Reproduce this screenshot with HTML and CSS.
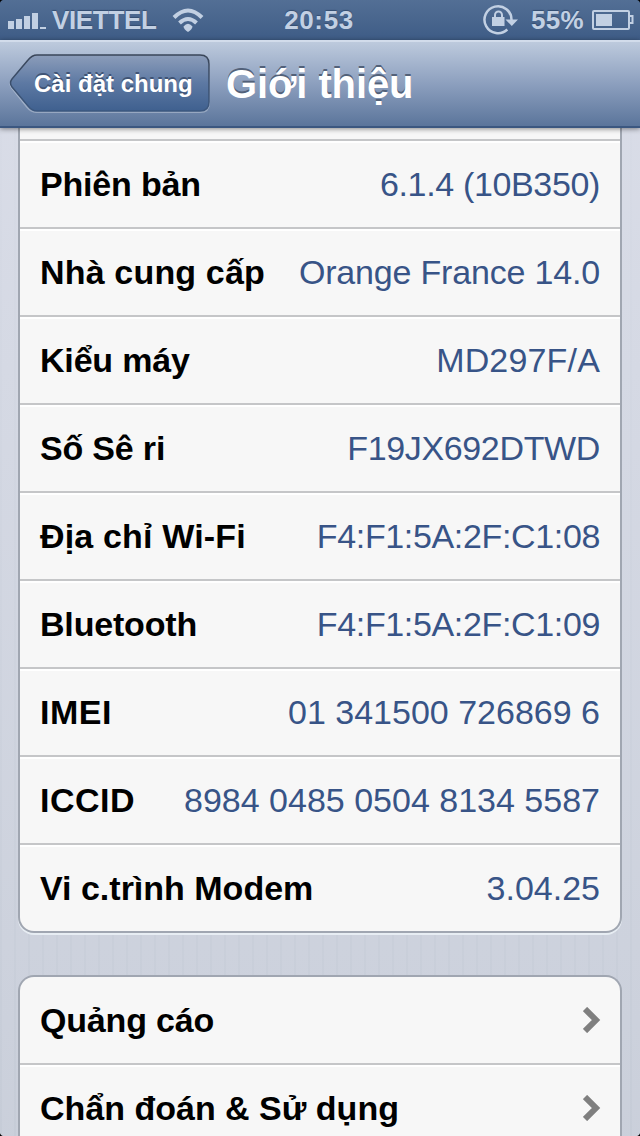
FILE: index.html
```html
<!DOCTYPE html>
<html lang="vi">
<head>
<meta charset="utf-8">
<title>Giới thiệu</title>
<link rel="stylesheet" href="styles.css">
</head>
<body>
<div class="screen">
  <div class="status">
    <div class="status-left">
      <svg class="signal" width="40" height="20" viewBox="0 0 40 20"><path d="M0 11h6v8H0zM8 9h6v10H8zM16 6h6v13h-6zM24 3h6v16h-6zM32 17h6v2h-6z"/></svg>
      <span class="carrier">VIETTEL</span>
      <svg class="wifi" width="32" height="24" viewBox="0 0 32 24"><path class="line" d="M2 9.500Q16-4.500 30 9.500M7.500 15Q16 7 24.500 15"/><path d="M11.500 18.500Q16 13 20.500 18.500Q20 21.500 16 24Q12 21.500 11.500 18.500z"/></svg>
    </div>
    <span class="clock">20:53</span>
    <div class="status-right">
      <svg class="lock" width="36" height="32" viewBox="0 0 36 32"><path class="ring" d="M24.300 25.500A13.500 13.500 0 1 1 28.500 16"/><path d="M22.500 15.500h12.500l-6.200 6.500zM9 13h12.500v9H9z"/><path class="shackle" d="M12 14v-3a3.500 3.500 0 0 1 7 0V14"/></svg>
      <span class="percent">55%</span>
      <svg class="battery" width="42" height="20" viewBox="0 0 42 20"><rect class="case" x="1" y="1" width="36" height="18" rx="1"/><path d="M4 4h16v12H4z"/><path class="case" d="M37 6h3.500v7H37"/></svg>
    </div>
  </div>
  <div class="nav">
    <div class="back">
      <svg class="back-shape" width="204" height="62" viewBox="0 0 204 62">
        <defs><linearGradient id="fill" x1="0" y1="0" x2="0" y2="1"><stop offset="0" stop-color="#8c9dba"/><stop offset=".5" stop-color="#5d79a3"/><stop offset="1" stop-color="#3f608f"/></linearGradient>
        <linearGradient id="edge" x1="0" y1="0" x2="0" y2="1"><stop offset="0" stop-color="#3a4659"/><stop offset="1" stop-color="#3c587f"/></linearGradient></defs>
        <path class="glow" d="M27 3H191Q200 3 200 12V49Q200 58 191 58H27Q22 58 18 53L3 34Q0 30 3 26Z"/>
        <path fill="url(#fill)" stroke="url(#edge)" stroke-width="1.500" d="M28 1H191Q200 1 200 10V48Q200 57 191 57H28Q23 57 19 52L3 33Q0 29 3 25L19 6Q23 1 28 1Z"/>
      </svg>
      <span class="back-label">Cài đặt chung</span>
    </div>
    <h1 class="title">Giới thiệu</h1>
  </div>
  <div class="content">
    <div class="group group-continued">
      <div class="row row-cut"></div>
      <div class="row"><span class="label tight">Phiên bản</span><span class="value tight-2">6.1.4 (10B350)</span></div>
      <div class="row"><span class="label loose">Nhà cung cấp</span><span class="value tight">Orange France 14.0</span></div>
      <div class="row"><span class="label tight">Kiểu máy</span><span class="value loose">MD297F/A</span></div>
      <div class="row"><span class="label tight">Số Sê ri</span><span class="value tight-2">F19JX692DTWD</span></div>
      <div class="row"><span class="label loose">Địa chỉ Wi-Fi</span><span class="value tight-2">F4:F1:5A:2F:C1:08</span></div>
      <div class="row"><span class="label tight">Bluetooth</span><span class="value tight-2">F4:F1:5A:2F:C1:09</span></div>
      <div class="row"><span class="label loose-2">IMEI</span><span class="value">01 341500 726869 6</span></div>
      <div class="row"><span class="label loose-2">ICCID</span><span class="value">8984 0485 0504 8134 5587</span></div>
      <div class="row"><span class="label">Vi c.trình Modem</span><span class="value">3.04.25</span></div>
    </div>
    <div class="group group-links">
      <div class="row row-first"><span class="label tight">Quảng cáo</span><svg class="chevron" width="18" height="26" viewBox="0 0 18 26"><path d="M2 2L13 13L2 24"/></svg></div>
      <div class="row"><span class="label">Chẩn đoán &amp; Sử dụng</span><svg class="chevron" width="18" height="26" viewBox="0 0 18 26"><path d="M2 2L13 13L2 24"/></svg></div>
    </div>
  </div>
  <i class="corner tl"></i><i class="corner tr"></i><i class="corner bl"></i><i class="corner br"></i>
</div>
</body>
</html>
```
FILE: styles.css
```css
* { box-sizing: border-box; }
body { margin: 0; font-family: "Liberation Sans", Arial, sans-serif; }
svg { display: block; flex: none; }
.screen { position: relative; width: 640px; height: 1136px; display: flex; flex-direction: column; overflow: hidden; background: #cbd0db; }

.status { height: 40px; flex: none; display: grid; grid-template-columns: 1fr auto 1fr; align-items: center; padding: 0 6px 0 8px; background: linear-gradient(#536f95, #3e5c86); color: #c2d0e3; font-size: 26px; font-weight: bold; line-height: 40px; text-shadow: 0 -1px 1px #344d70; }
.status svg { fill: #c2d0e3; }
.status-left, .status-right { display: flex; align-items: center; }
.status-right { justify-content: flex-end; }
.carrier { margin-left: 4px; letter-spacing: -.35px; }
.wifi { margin-left: 16px; }
.wifi .line { fill: none; stroke: #c2d0e3; stroke-width: 4; }
.clock { letter-spacing: .6px; margin-right: 4px; }
.lock { margin-right: 12px; }
.lock .ring, .lock .shackle, .battery .case { fill: none; stroke: #c2d0e3; stroke-width: 2; }
.lock .ring { stroke-width: 2.500px; }
.percent { margin-right: 8px; letter-spacing: .3px; }

.nav { position: relative; z-index: 1; height: 88px; flex: none; display: flex; align-items: flex-start; padding: 12px 0 0 9px; background: linear-gradient(#bdcadd, #8c9fbe 50%, #5b759b); border-top: 2px solid #d2dceb; border-bottom: 2px solid #3b5780; box-shadow: 0 1px 5px rgba(0,0,0,.45); color: #fff; }
.back { display: grid; width: 204px; height: 62px; flex: none; }
.back-shape, .back-label { grid-area: 1 / 1; }
.back-shape .glow { fill: none; stroke: rgba(255,255,255,.3); stroke-width: 2; }
.back-label { z-index: 1; padding-left: 25px; font-size: 24px; font-weight: bold; line-height: 59px; white-space: nowrap; text-shadow: 0 -2px 0 #405475; }
.title { margin: 0 0 0 13px; font-size: 40px; line-height: 60px; white-space: nowrap; letter-spacing: -.1px; text-shadow: 0 -2px 0 #526179; }

.content { flex: 1; min-height: 0; overflow: hidden; padding: 0 18px; background: linear-gradient(rgba(222,225,236,.7), rgba(197,204,216,.1)), repeating-linear-gradient(90deg, #c6ccd7 0 2px, #cbd0db 2px 14px); }
.group { border: 2px solid #a0a6b1; background: #f7f7f7; }
.group-continued { border-top: 0; border-radius: 0 0 16px 16px; box-shadow: 0 2px 0 #e7edf3; }
.group-links { margin-top: 42px; border-bottom: 0; border-radius: 16px 16px 0 0; }
.row { height: 88px; display: flex; align-items: center; justify-content: space-between; padding: 0 20px; border-top: 2px solid #c5c6c8; box-shadow: inset 0 2px 0 #fff; white-space: nowrap; font-size: 34px; }
.row:last-child { border-radius: 0 0 14px 14px; }
.row-cut { height: 11px; border: 0; box-shadow: none; }
.row-first { height: 86px; border: 0; box-shadow: none; }
.group-links .row:last-child { border-radius: 0; }
.label { font-weight: bold; color: #000; }
.value { color: #385487; }
.tight { letter-spacing: -.18px; }
.tight-2 { letter-spacing: -.35px; }
.loose { letter-spacing: .17px; }
.loose-2 { letter-spacing: .5px; }
.chevron { fill: none; stroke: #7f7f7f; stroke-width: 6; margin-right: -1px; }

.corner { position: absolute; z-index: 2; width: 5px; height: 5px; }
.tl { top: 0; left: 0; background: radial-gradient(circle at 100% 100%, transparent 5px, #000 6px); }
.tr { top: 0; right: 0; background: radial-gradient(circle at 0 100%, transparent 5px, #000 6px); }
.bl { bottom: 0; left: 0; background: radial-gradient(circle at 100% 0, transparent 5px, #000 6px); }
.br { bottom: 0; right: 0; background: radial-gradient(circle at 0 0, transparent 5px, #000 6px); }
```
